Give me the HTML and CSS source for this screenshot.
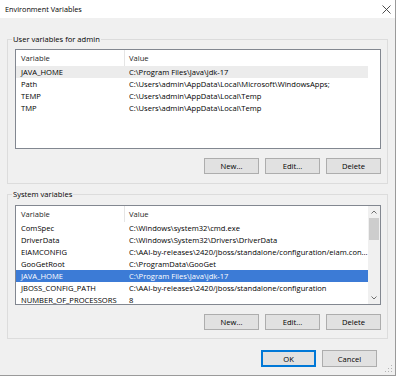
FILE: index.html
```html
<!DOCTYPE html>
<html>
<head>
<meta charset="utf-8">
<link rel="stylesheet" href="styles.css">
</head>
<body>
<div class="window">
  <div class="titlebar">
    <span class="title">Environment Variables</span>
    <svg class="close" width="9" height="9" viewBox="0 0 9 9"><path d="M0.5 0.5 L8.5 8.5 M8.5 0.5 L0.5 8.5" stroke="#3a3a3a" stroke-width="0.9" fill="none"/></svg>
  </div>
  <div class="body">
    <div class="group g1">
      <div class="group-label">User variables for admin</div>
      <div class="list">
        <div class="cols">
          <div class="hdr"><div class="c1">Variable</div><div class="c2">Value</div></div>
          <div class="row hover"><div class="c1">JAVA_HOME</div><div class="c2">C:\Program Files\Java\jdk-17</div></div>
          <div class="row"><div class="c1">Path</div><div class="c2">C:\Users\admin\AppData\Local\Microsoft\WindowsApps;</div></div>
          <div class="row"><div class="c1">TEMP</div><div class="c2">C:\Users\admin\AppData\Local\Temp</div></div>
          <div class="row"><div class="c1">TMP</div><div class="c2">C:\Users\admin\AppData\Local\Temp</div></div>
        </div>
      </div>
      <div class="btns">
        <button class="btn">New...</button>
        <button class="btn">Edit...</button>
        <button class="btn">Delete</button>
      </div>
    </div>
    <div class="group g2">
      <div class="group-label">System variables</div>
      <div class="list">
        <div class="cols">
          <div class="hdr"><div class="c1">Variable</div><div class="c2">Value</div></div>
          <div class="row"><div class="c1">ComSpec</div><div class="c2">C:\Windows\system32\cmd.exe</div></div>
          <div class="row"><div class="c1">DriverData</div><div class="c2">C:\Windows\System32\Drivers\DriverData</div></div>
          <div class="row"><div class="c1">EIAMCONFIG</div><div class="c2">C:\AAI-by-releases\2420/jboss/standalone/configuration/eiam.con...</div></div>
          <div class="row"><div class="c1">GooGetRoot</div><div class="c2">C:\ProgramData\GooGet</div></div>
          <div class="row selected"><div class="c1">JAVA_HOME</div><div class="c2">C:\Program Files\Java\jdk-17</div></div>
          <div class="row"><div class="c1">JBOSS_CONFIG_PATH</div><div class="c2">C:\AAI-by-releases\2420/jboss/standalone/configuration</div></div>
          <div class="row"><div class="c1">NUMBER_OF_PROCESSORS</div><div class="c2">8</div></div>
        </div>
        <div class="scrollbar">
          <div class="arrow"><svg width="6" height="4" viewBox="0 0 6 4"><path d="M0.5 3.5 L3 1 L5.5 3.5" stroke="#606060" stroke-width="0.9" fill="none"/></svg></div>
          <div class="thumb"></div>
          <div class="track"></div>
          <div class="arrow"><svg width="6" height="4" viewBox="0 0 6 4"><path d="M0.5 0.5 L3 3 L5.5 0.5" stroke="#606060" stroke-width="0.9" fill="none"/></svg></div>
        </div>
      </div>
      <div class="btns">
        <button class="btn">New...</button>
        <button class="btn">Edit...</button>
        <button class="btn">Delete</button>
      </div>
    </div>
    <div class="dlg-btns">
      <button class="btn default">OK</button>
      <button class="btn">Cancel</button>
    </div>
    <svg class="grip" width="8" height="8" viewBox="0 0 8 8"><g fill="#b4b4b4"><rect x="6" y="0" width="1" height="1"/><rect x="3" y="3" width="1" height="1"/><rect x="6" y="3" width="1" height="1"/><rect x="0" y="6" width="1" height="1"/><rect x="3" y="6" width="1" height="1"/><rect x="6" y="6" width="1" height="1"/></g></svg>
  </div>
</div>
</body>
</html>
```
FILE: styles.css
```css
html, body {
  margin: 0;
  padding: 0;
  background: #ffffff;
}
body {
  font-family: "Open Sans", "Noto Sans", sans-serif;
  font-size: 7.6px;
  color: #000;
}
.window {
  width: 396px;
  height: 376px;
  box-sizing: border-box;
  border-right: 1px solid #9a9a9a;
  border-bottom: 1px solid #9a9a9a;
  display: flex;
  flex-direction: column;
}
.titlebar {
  height: 18px;
  flex: none;
  background: #fff;
  display: flex;
  align-items: center;
  justify-content: space-between;
  padding: 0 4px 0 5px;
}
.title {
  font-size: 7.3px;
  line-height: 18px;
}
.close {
  display: block;
}
.body {
  flex: 1;
  background: #f0f0f0;
  position: relative;
  padding-top: 21px;
}
.group {
  position: relative;
  width: 381px;
  box-sizing: border-box;
  margin-left: 7px;
  border: 1px solid #dcdcdc;
  padding: 9px 6px 9px 7px;
}
.g2 {
  margin-top: 10px;
  padding-top: 10px;
  padding-bottom: 8px;
}
.group-label {
  position: absolute;
  top: -7px;
  left: 4px;
  padding: 0 1px;
  line-height: 12px;
  background: #f0f0f0;
}
.list {
  width: 366px;
  height: 100px;
  box-sizing: border-box;
  border: 1px solid #828790;
  background: #fff;
  display: flex;
  overflow: hidden;
}
.cols {
  width: 352px;
  flex: none;
}
.hdr, .row {
  display: flex;
  white-space: nowrap;
}
.hdr {
  height: 16px;
  line-height: 16px;
  color: #1e1e1e;
}
.row {
  height: 12px;
  line-height: 12px;
}
.c1 {
  width: 109px;
  flex: none;
  box-sizing: border-box;
  padding-left: 5px;
  overflow: hidden;
}
.c2 {
  flex: 1;
  min-width: 0;
  padding-left: 4px;
  overflow: hidden;
}
.hdr .c1 {
  border-right: 1px solid #e5e5e5;
}
.row.hover {
  background: #ececec;
}
.row.selected {
  background: #3c7bd6;
  color: #fff;
}
.scrollbar {
  width: 12px;
  flex: none;
  background: #f0f0f0;
  display: flex;
  flex-direction: column;
}
.arrow {
  height: 12px;
  display: flex;
  align-items: center;
  justify-content: center;
}
.thumb {
  height: 22px;
  margin: 0 1px;
  background: #cdcdcd;
}
.track {
  flex: 1;
}
.btns {
  display: flex;
  justify-content: flex-end;
  gap: 6px;
  margin-top: 9px;
}
.btn {
  width: 55px;
  height: 16px;
  box-sizing: border-box;
  border: 1px solid #adadad;
  background: #e1e1e1;
  font-family: inherit;
  font-size: 7.6px;
  color: #000;
  padding: 0;
  line-height: 14px;
}
.dlg-btns {
  display: flex;
  justify-content: flex-end;
  gap: 6px;
  margin-top: 11px;
  margin-right: 18px;
}
.dlg-btns .btn {
  height: 17px;
  width: 55px;
}
.btn.default {
  border: 1px solid #0078d7;
  box-shadow: inset 0 0 0 1px #0078d7;
}
.grip {
  position: absolute;
  right: 2px;
  bottom: 2px;
}
```
